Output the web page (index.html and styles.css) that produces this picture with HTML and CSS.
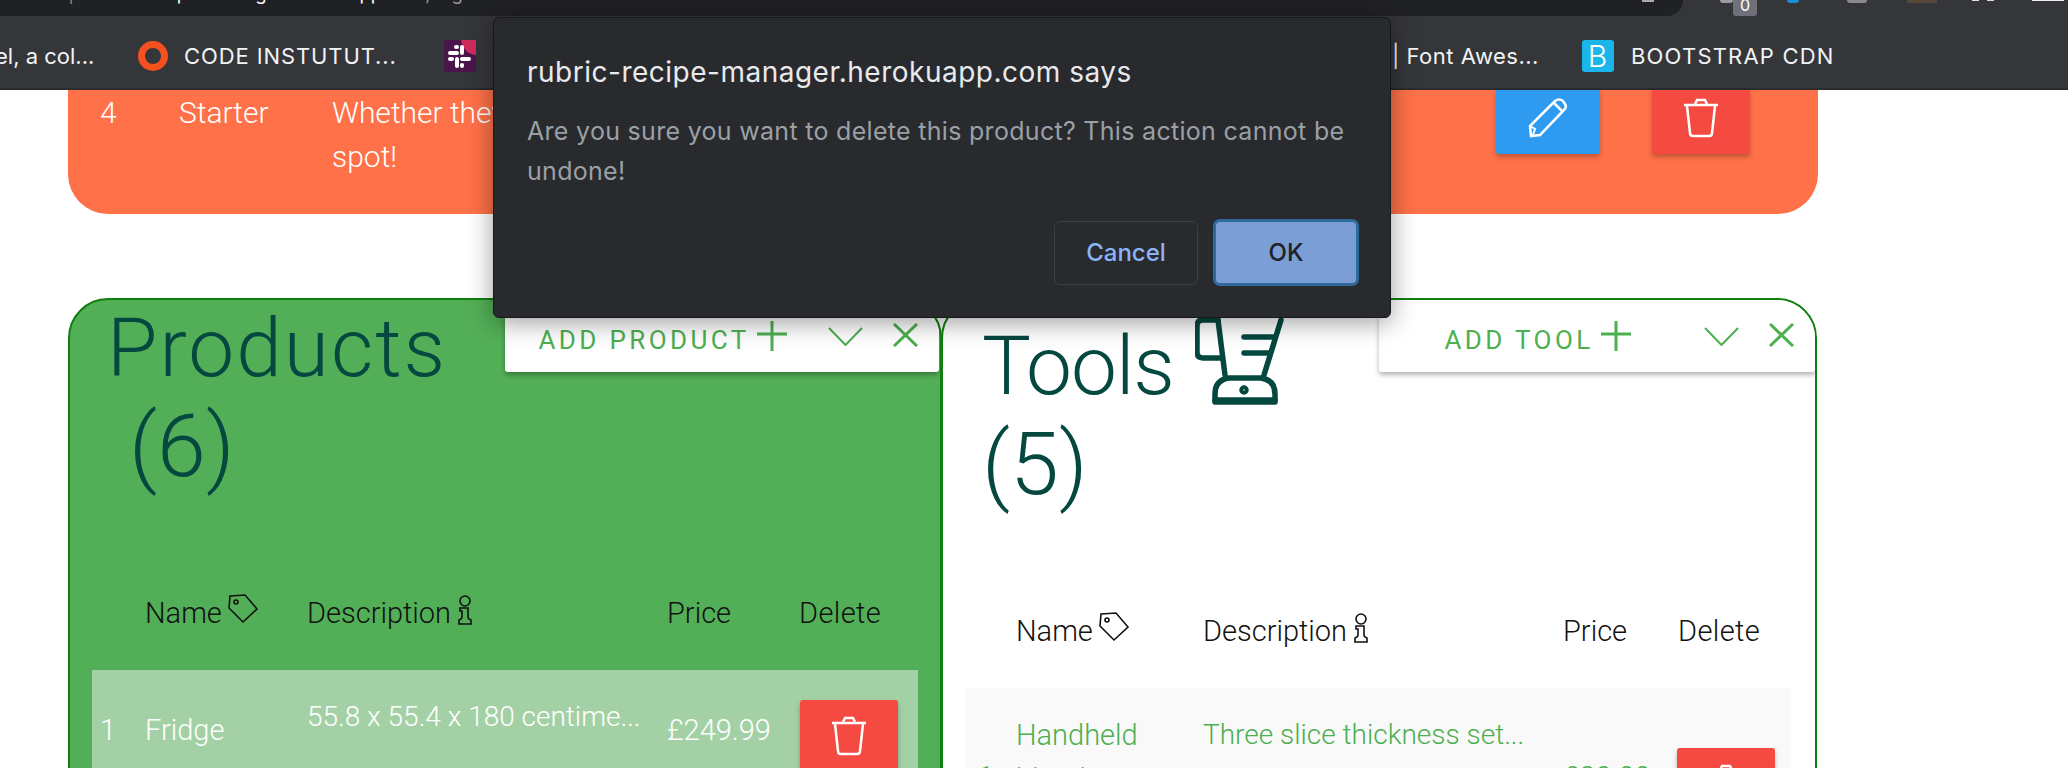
FILE: index.html
```html
<!DOCTYPE html>
<html lang="en">
<head>
    <meta charset="UTF-8">
    <title>Rubric Recipe Manager</title>
    <link rel="stylesheet" href="styles.css">
</head>
<body>

<header class="browser">
    <div class="toolbar">
        <div class="address">
            <span class="url-sep">|</span>
            <span class="url">rubric-recipe-manager.herokuapp.com<span class="url-path">, login</span></span>
            <span class="star"></span>
        </div>
        <span class="ext ext-shield"></span>
        <span class="ext-badge">0</span>
        <span class="ext ext-blue"></span>
        <span class="ext ext-grey"></span>
        <span class="ext ext-photo"></span>
        <span class="ext ext-white"></span>
        <span class="ext ext-white"></span>
        <span class="ext ext-menu"></span>
    </div>
    <nav class="bookmarks">
        <span class="mark mark-cut">el, a col...</span>
        <span class="mark mark-code">
            <span class="ring"></span>
            CODE INSTUTUT...
        </span>
        <span class="mark mark-slack">
            <svg class="slack" viewBox="0 0 32 32" width="32" height="32">
                <rect width="32" height="32" fill="#4a154b"/>
                <path d="M17 0H32V15Q20 14 17 0Z" fill="#cf2c5e"/>
                <g stroke="#fff" stroke-width="4" stroke-linecap="round">
                    <path d="M6 13H13"/>
                    <path d="M18 19H25"/>
                    <path d="M13 19V26"/>
                    <path d="M6 19H8"/>
                    <path d="M18 7V13"/>
                    <path d="M12 7H13"/>
                    <path d="M18 25V26"/>
                </g>
            </svg>
        </span>
        <span class="mark mark-awesome">| Font Awes...</span>
        <span class="mark mark-boot">
            <span class="boot-icon">B</span>
            BOOTSTRAP CDN
        </span>
    </nav>
</header>

<main class="page">
    <section class="starter">
        <span class="starter-num">4</span>
        <span class="starter-name">Starter</span>
        <p class="starter-desc">Whether they are sat down for dinner, this will hit the<br>spot!</p>
        <a class="btn btn-edit">
            <svg class="icon-pencil" viewBox="0 0 40 40" width="40" height="40">
                <path d="M3 38L2 28L27 3Q31 0 35 3L37 6Q39 9 36 12L12 37Z"/>
                <path d="M26 5L35 14"/>
                <path d="M2 28L7 31L5 37" stroke-width="2"/>
            </svg>
        </a>
        <a class="btn btn-delete">
            <svg class="icon-trash" viewBox="0 0 34 40" width="34" height="40">
                <path d="M0 7H34"/>
                <path d="M11 6L13 2H21L23 6"/>
                <path d="M3 8L6 35Q6 38 9 38H25Q28 38 28 35L31 8"/>
            </svg>
        </a>
    </section>

    <div class="panels">
        <section class="panel panel-products">
            <div class="panel-head">
                <h2 class="panel-title">
                    <span class="title-line">Products</span>
                    <span class="title-count">(6)</span>
                </h2>
                <div class="add-box">
                    <a class="add-link">
                        ADD PRODUCT
                        <svg class="add-plus" viewBox="0 0 30 30" width="30" height="30"><path d="M0 13H30M15 0V30"/></svg>
                    </a>
                    <svg class="add-chevron" viewBox="0 0 35 19" width="35" height="19"><path d="M1 1L17.500 18L34 1"/></svg>
                    <svg class="add-close" viewBox="0 0 25 24" width="25" height="24"><path d="M1 1L24 23M24 1L1 23"/></svg>
                </div>
            </div>
            <div class="table-row table-head">
                <span></span>
                <span class="th">Name
                    <svg class="icon-tag" viewBox="0 0 30 30" width="30" height="30">
                        <path d="M2 2L17 1L29 15L15 28L1 14Z"/>
                        <circle cx="8" cy="8" r="2"/>
                    </svg>
                </span>
                <span class="th">Description
                    <svg class="icon-info" viewBox="0 0 16 30" width="16" height="30">
                        <circle cx="8" cy="6" r="5"/>
                        <path d="M3 13H11V22Q11 24 14 25V29H2V25Q5 24 5 22V16H3Z"/>
                    </svg>
                </span>
                <span class="th">Price</span>
                <span class="th th-delete">Delete</span>
            </div>
            <div class="table-row item-row">
                <span>1</span>
                <span>Fridge</span>
                <span class="item-desc">55.8 x 55.4 x 180 centime...</span>
                <span>£249.99</span>
                <a class="btn btn-delete btn-row">
                    <svg class="icon-trash" viewBox="0 0 34 40" width="34" height="40">
                        <path d="M0 7H34"/>
                        <path d="M11 6L13 2H21L23 6"/>
                        <path d="M3 8L6 35Q6 38 9 38H25Q28 38 28 35L31 8"/>
                    </svg>
                </a>
            </div>
        </section>

        <section class="panel panel-tools">
            <div class="panel-head">
                <h2 class="panel-title">
                    <span class="title-line">Tools
                        <svg class="icon-blender" viewBox="0 0 90 105" width="90" height="105">
                            <path d="M23 20L30 75M86 20L69 75"/>
                            <path d="M23 20H8Q2 20 2 26V52Q2 58 8 58H27"/>
                            <path d="M49 37H78M49 53H75"/>
                            <path d="M20 102V94Q20 80 34 78H66Q80 80 80 94V102Z"/>
                            <path d="M20 100H80"/>
                            <circle cx="49" cy="90" r="2"/>
                        </svg>
                    </span>
                    <span class="title-count">(5)</span>
                </h2>
                <div class="add-box">
                    <a class="add-link">
                        ADD TOOL
                        <svg class="add-plus" viewBox="0 0 30 30" width="30" height="30"><path d="M0 13H30M15 0V30"/></svg>
                    </a>
                    <svg class="add-chevron" viewBox="0 0 35 19" width="35" height="19"><path d="M1 1L17.500 18L34 1"/></svg>
                    <svg class="add-close" viewBox="0 0 25 24" width="25" height="24"><path d="M1 1L24 23M24 1L1 23"/></svg>
                </div>
            </div>
            <div class="table-row table-head">
                <span></span>
                <span class="th">Name
                    <svg class="icon-tag" viewBox="0 0 30 30" width="30" height="30">
                        <path d="M2 2L17 1L29 15L15 28L1 14Z"/>
                        <circle cx="8" cy="8" r="2"/>
                    </svg>
                </span>
                <span class="th">Description
                    <svg class="icon-info" viewBox="0 0 16 30" width="16" height="30">
                        <circle cx="8" cy="6" r="5"/>
                        <path d="M3 13H11V22Q11 24 14 25V29H2V25Q5 24 5 22V16H3Z"/>
                    </svg>
                </span>
                <span class="th">Price</span>
                <span class="th th-delete">Delete</span>
            </div>
            <div class="table-row item-row">
                <span class="item-num">1</span>
                <span class="item-name">Handheld blender</span>
                <span class="item-desc">Three slice thickness set...</span>
                <span class="item-price">£29.99</span>
                <a class="btn btn-delete btn-row">
                    <svg class="icon-trash" viewBox="0 0 34 40" width="34" height="40">
                        <path d="M0 7H34"/>
                        <path d="M11 6L13 2H21L23 6"/>
                        <path d="M3 8L6 35Q6 38 9 38H25Q28 38 28 35L31 8"/>
                    </svg>
                </a>
            </div>
        </section>
    </div>
</main>

<div class="dialog">
    <h3 class="dialog-title">rubric-recipe-manager.herokuapp.com says</h3>
    <p class="dialog-text">Are you sure you want to delete this product? This action cannot be undone!</p>
    <div class="dialog-actions">
        <button class="dialog-cancel">Cancel</button>
        <button class="dialog-ok">OK</button>
    </div>
</div>

</body>
</html>
```

FILE: styles.css
```css
html, body {
    margin: 0;
    padding: 0;
    height: 768px;
    overflow: hidden;
    background-color: #fff;
}

body {
    position: relative;
    font-family: 'Roboto', 'Liberation Sans', sans-serif;
    font-weight: 300;
}

/* browser chrome */
.browser {
    background-color: #35363a;
    border-bottom: 2px solid #2a2b2e;
    font-family: 'Inter', 'Liberation Sans', sans-serif;
    font-weight: 400;
    color: #f1f3f4;
}

.toolbar {
    height: 16px;
    display: flex;
    overflow: hidden;
}

.address {
    width: 1683px;
    height: 16px;
    background-color: #202124;
    border-radius: 0 0 18px 0;
    position: relative;
    overflow: hidden;
    flex: none;
    display: flex;
    font-size: 18.5px;
    line-height: 24px;
    color: #fff;
    white-space: nowrap;
}

.url-sep {
    margin: -19px 0 0 68px;
    color: #888;
}

.url {
    margin: -19px 0 0 10px;
}

.url-path {
    color: #999;
}

.star {
    position: absolute;
    left: 1642px;
    top: 0;
    width: 12px;
    height: 2px;
    background-color: #aaa;
}

.ext {
    flex: none;
    background-color: #aaa;
}

.ext-shield {
    width: 13px;
    height: 3px;
    margin-left: 37px;
    background-color: #9b9ca1;
    border-radius: 0 0 6px 6px;
}

.ext-badge {
    flex: none;
    width: 24px;
    height: 16px;
    background-color: #6f7079;
    border-radius: 0 0 3px 3px;
    color: #fff;
    font-size: 16px;
    line-height: 10px;
    text-align: center;
}

.ext-blue {
    width: 12px;
    height: 3px;
    margin-left: 30px;
    background-color: #1a8fd8;
    border-radius: 0 0 6px 6px;
}

.ext-grey {
    width: 20px;
    height: 3px;
    margin-left: 48px;
    background-color: #8a8a8a;
    border-radius: 0 0 10px 10px;
}

.ext-photo {
    width: 30px;
    height: 3px;
    margin-left: 40px;
    background-color: #57483a;
}

.ext-white {
    width: 7px;
    height: 1px;
    margin-left: 35px;
    background-color: #ddd;
}

.ext-white + .ext-white {
    margin-left: 8px;
}

.ext-menu {
    width: 32px;
    height: 1px;
    margin-left: 38px;
    background-color: #eee;
}

.bookmarks {
    height: 72px;
    box-sizing: border-box;
    padding-top: 8px;
    display: flex;
    align-items: center;
    font-size: 22px;
    white-space: nowrap;
}

.mark {
    display: flex;
    align-items: center;
    flex: none;
}

.mark-cut {
    margin-left: -5px;
    width: 143px;
}

.mark-code {
    width: 306px;
    letter-spacing: 0.9px;
}

.ring {
    width: 30px;
    height: 30px;
    box-sizing: border-box;
    border: 7px solid #f4511e;
    border-radius: 50%;
    margin-right: 16px;
}

.slack {
    display: block;
}

.mark-slack {
    width: 948px;
}

.mark-awesome {
    width: 190px;
    letter-spacing: 0.5px;
}

.mark-boot {
    letter-spacing: 1.2px;
}

.boot-icon {
    width: 32px;
    height: 32px;
    background-color: #1ab5ea;
    border-radius: 3px;
    margin-right: 17px;
    font-size: 30px;
    font-weight: 300;
    line-height: 32px;
    text-align: center;
    color: #fff;
}

/* page */
.page {
    display: flex;
    flex-direction: column;
}

.starter {
    height: 124px;
    margin: 0 250px 0 68px;
    background-color: #ff7149;
    border-radius: 0 0 40px 40px;
    color: #fff;
    display: flex;
    align-items: flex-start;
    font-size: 30px;
    line-height: 44px;
}

.starter-num {
    margin: 1px 0 0 32px;
    width: 79px;
}

.starter-name {
    margin-top: 1px;
    width: 153px;
}

.starter-desc {
    margin: 1px 0 0;
    width: 1164px;
    flex: none;
    white-space: nowrap;
    overflow: hidden;
}

.btn {
    display: flex;
    justify-content: center;
    color: #fff;
    box-shadow: 0 3px 5px rgba(0, 0, 0, 0.25);
    border-radius: 0 0 3px 3px;
    flex: none;
    box-sizing: border-box;
}

.btn svg {
    margin-top: 8px;
    fill: none;
    stroke: #fff;
    stroke-width: 2.5;
}

.btn-edit {
    width: 104px;
    height: 64px;
    background-color: #2e9bf0;
}

.btn-delete {
    width: 98px;
    height: 64px;
    background-color: #f44a41;
    margin-left: 52px;
}

.panels {
    display: flex;
    margin: 84px 0 0 68px;
    width: 1750px;
}

.panel {
    height: 700px;
    box-sizing: border-box;
    border: 2px solid #0f800f;
    border-radius: 40px;
    overflow: hidden;
}

.panel-products {
    width: 874px;
    background-color: #52af57;
}

.panel-tools {
    width: 876px;
    background-color: #fff;
    margin-left: -1px;
}

.panel-head {
    display: flex;
    align-items: flex-start;
    justify-content: space-between;
}

.panel-title {
    margin: 0;
    color: #05483f;
    font-size: 82px;
    font-weight: 300;
    line-height: 96px;
}

.panel-products .panel-title {
    padding-left: 37px;
}

.panel-products .title-line {
    letter-spacing: 2px;
}

.panel-tools .panel-title {
    padding: 18px 0 0 39px;
}

.panel-tools .title-line {
    letter-spacing: -1px;
}

.title-line {
    display: flex;
    align-items: flex-start;
}

.title-count {
    display: block;
    font-size: 88px;
    margin-top: 2px;
    height: 94px;
}

.panel-products .title-count {
    padding-left: 22px;
}

.icon-blender {
    margin: -18px 0 0 21px;
    fill: none;
    stroke: #05483f;
    stroke-width: 5.5;
    stroke-linejoin: round;
    stroke-linecap: round;
    flex: none;
}

.add-box {
    width: 434px;
    height: 72px;
    box-sizing: border-box;
    padding: 21px 21px 0 0;
    margin-right: 1px;
    display: flex;
    align-items: flex-start;
    background-color: #fff;
    color: #4caf50;
    border-radius: 3px;
    box-shadow: 0 3px 5px rgba(0, 0, 0, 0.3);
    font-size: 26px;
    font-weight: 400;
    line-height: 30px;
}

.panel-tools .add-box {
    width: 436px;
    margin-right: 0;
}

.add-link {
    flex: 1;
    display: flex;
    align-items: flex-start;
    justify-content: center;
    gap: 7px;
    padding-right: 8px;
    padding-top: 4px;
    white-space: nowrap;
    letter-spacing: 3.4px;
}

.add-plus {
    margin-top: -4px;
    fill: none;
    stroke: #4caf50;
    stroke-width: 3;
}

.add-chevron {
    margin-top: 6px;
    fill: none;
    stroke: #4caf50;
    stroke-width: 2;
    flex: none;
}

.add-close {
    margin: 2px 0 0 30px;
    fill: none;
    stroke: #4caf50;
    stroke-width: 3;
    flex: none;
}

/* tables */
.table-row {
    display: grid;
    align-items: center;
    font-size: 29px;
    line-height: 40px;
}

.panel-products .table-row {
    grid-template-columns: 45px 162px 360px 131px 1fr;
    margin: 0 22px 0 22px;
    padding-left: 8px;
}

.panel-tools .table-row {
    grid-template-columns: 50px 187px 360px 114px 1fr;
    margin: 0 24px 0 23px;
    padding-left: 0;
}

.table-head {
    color: #111;
    white-space: nowrap;
}

.panel-products .table-head, .panel-tools .table-head {
    padding-top: 101px;
    height: 40px;
    padding-bottom: 37px;
}

.th {
    display: flex;
    align-items: center;
    gap: 6px;
}

.th-delete {
    padding-left: 1px;
    letter-spacing: 0.4px;
}

.icon-tag, .icon-info {
    fill: none;
    stroke: #111;
    stroke-width: 1.6;
    flex: none;
}

.icon-tag {
    margin-top: -8px;
}

.icon-info {
    margin-top: -6px;
}

.item-row {
    height: 150px;
    align-items: start;
    white-space: nowrap;
}

.item-desc {
    font-size: 28px;
}

.panel-products .item-row {
    background-color: #a3d1a5;
    color: #fff;
}

.panel-tools .item-row {
    background-color: #f9f9f9;
    color: #4caf50;
}

.panel-products .item-row > span {
    margin-top: 40px;
}

.panel-products .item-row > .item-desc {
    margin-top: 27px;
}

.panel-tools .item-row > span {
    margin-top: 27px;
}

.panel-tools .item-row > .item-num,
.panel-tools .item-row > .item-price {
    margin-top: 69px;
}

.panel-tools .item-row > .item-name {
    margin-top: 25px;
    white-space: normal;
    line-height: 44px;
}

.item-num {
    padding-left: 12px;
}

.btn-row {
    margin: 30px 0 0 2px;
    height: 100px;
    border-radius: 3px;
}

.panel-tools .btn-row {
    margin: 60px 0 0;
}

.btn-row svg {
    margin-top: 16px;
}

/* confirm dialog */
.dialog {
    position: absolute;
    left: 493px;
    top: 17px;
    width: 898px;
    height: 301px;
    box-sizing: border-box;
    padding: 36px 31px 0 33px;
    background-color: #292a2d;
    border: 1px solid #17181a;
    border-radius: 6px;
    box-shadow: 0 4px 26px rgba(0, 0, 0, 0.4);
    font-family: 'Inter', 'Liberation Sans', sans-serif;
    font-weight: 400;
}

.dialog-title {
    margin: 0;
    font-size: 28px;
    font-weight: 400;
    letter-spacing: 0.5px;
    line-height: 36px;
    color: #e8eaed;
}

.dialog-text {
    margin: 21px 0 0;
    font-size: 25px;
    letter-spacing: 0.3px;
    line-height: 40px;
    color: #9aa0a6;
    padding-right: 10px;
}

.dialog-actions {
    display: flex;
    justify-content: flex-end;
    align-items: center;
    gap: 15px;
    margin-top: 28px;
}

.dialog-cancel, .dialog-ok {
    font-family: inherit;
    font-size: 24px;
    font-weight: 500;
    padding: 0;
    box-sizing: border-box;
}

.dialog-cancel {
    width: 144px;
    height: 64px;
    background-color: #292a2d;
    border: 1px solid #3c4043;
    border-radius: 6px;
    color: #8ab4f8;
}

.dialog-ok {
    width: 146px;
    height: 67px;
    background-color: #7b9ed6;
    border: 3px solid #2f6a9d;
    border-radius: 7px;
    color: #202124;
}
```
